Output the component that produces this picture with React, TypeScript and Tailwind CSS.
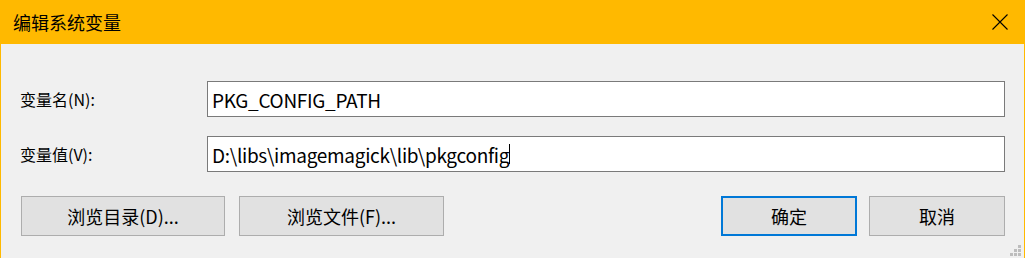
import React from "react";

const font = { fontFamily: '"Noto Sans CJK SC", "Noto Sans", sans-serif' };

function Grip() {
  const dots: [number, number][] = [
    [8, 0],
    [4, 4],
    [8, 4],
    [0, 8],
    [4, 8],
    [8, 8],
  ];
  return (
    <svg width="11" height="11" className="absolute right-[3px] bottom-[2px]">
      {dots.map(([x, y], i) => (
        <rect key={i} x={x} y={y} width="3" height="3" fill="#BDBDBD" />
      ))}
    </svg>
  );
}

export default function App() {
  return (
    <div
      className="relative w-[1025px] h-[258px] border-x border-[#FFB900] bg-[#F0F0F0] flex flex-col text-black"
      style={font}
    >
      <div className="h-[44px] bg-[#FFB900] flex items-center justify-between pl-[12px] pr-[16px]">
        <span className="text-[18px] leading-none">编辑系统变量</span>
        <svg width="16" height="16" viewBox="0 0 16 16">
          <path d="M0.5 0.5 L15.5 15.5 M15.5 0.5 L0.5 15.5" stroke="#000" strokeWidth="1.1" />
        </svg>
      </div>
      <div className="flex flex-col px-[19px] pt-[37px]">
        <div className="flex items-center">
          <label className="w-[187px] text-[16px] leading-none">变量名(N):</label>
          <div className="flex-1 h-[36px] border border-[#7A7A7A] bg-white flex items-center pl-[4px] text-[19px] tracking-[-0.3px] leading-none">
            PKG_CONFIG_PATH
          </div>
        </div>
        <div className="flex items-center mt-[19px]">
          <label className="w-[187px] text-[16px] leading-none">变量值(V):</label>
          <div className="flex-1 h-[36px] border border-[#7A7A7A] bg-white flex items-center pl-[4px] text-[19px] tracking-[-0.3px] leading-none">
            <span>D:\libs\imagemagick\lib\pkgconfig</span>
            <span className="inline-block w-px h-[20px] bg-black" />
          </div>
        </div>
        <div className="flex items-center mt-[24px] pl-[1px]">
          <button className="w-[204px] h-[40px] border border-[#ADADAD] bg-[#E1E1E1] text-[18px] leading-none">
            浏览目录(D)...
          </button>
          <button className="w-[205px] h-[40px] ml-[14px] border border-[#ADADAD] bg-[#E1E1E1] text-[18px] leading-none">
            浏览文件(F)...
          </button>
          <div className="flex-1" />
          <button className="w-[136px] h-[40px] border-2 border-[#0078D7] bg-[#E1E1E1] text-[18px] leading-none">
            确定
          </button>
          <button className="w-[136px] h-[40px] ml-[12px] border border-[#ADADAD] bg-[#E1E1E1] text-[18px] leading-none">
            取消
          </button>
        </div>
      </div>
      <Grip />
    </div>
  );
}
